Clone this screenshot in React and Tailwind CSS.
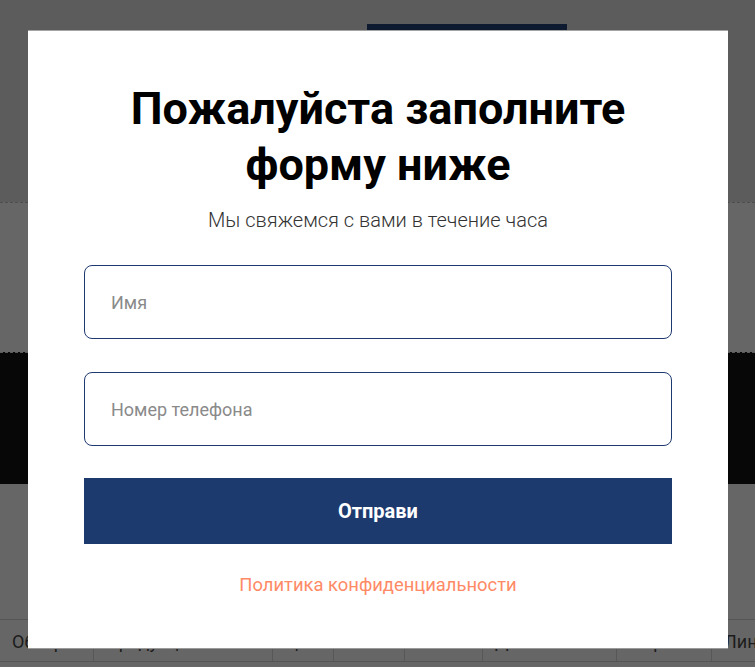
export default function App() {
    const cells = [
        { w: "w-[94px]", text: "Обзор" },
        { w: "w-[179px]", text: "Продукция" },
        { w: "w-[61px]", text: "Цены" },
        { w: "w-[71px]", text: "О нас" },
        { w: "w-[78px]", text: "Отзыв" },
        { w: "w-[134px]", text: "Доставка" },
        { w: "w-[95px]", text: "Форма" },
        { w: "w-[43px]", text: "Лин" },
    ];

    return (
        <div className="relative w-[755px] h-[667px] overflow-hidden bg-[#666666] font-['Roboto','Liberation_Sans',sans-serif]">
            {/* page behind the overlay */}
            <div className="h-[202px] bg-[#5c5c5c] pt-[24px]">
                <div className="ml-[367px] w-[200px] h-[8px] bg-[#0e1a30]" />
            </div>
            <div className="h-[150px] border-t border-dashed border-[#4e4e4e] bg-[#666666]" />
            <div className="h-[132px] border-t border-dashed border-[#5a5a5a] bg-[#070707]" />
            <div className="h-[135px] bg-[#666666]" />
            <div className="flex h-[43px] border-y border-[#555555] bg-[#666666]">
                {cells.map((c, i) => (
                    <div
                        key={i}
                        className={`${c.w} shrink-0 overflow-hidden whitespace-nowrap border-r border-[#575757] pl-[12px] pt-[8px] text-[18px] text-[#1c1c1c] last:border-r-0 last:pl-[12px]`}
                    >
                        {c.text}
                    </div>
                ))}
            </div>

            {/* modal */}
            <div className="absolute left-[28px] top-[30px] w-[700px] h-[618px] bg-white border-t border-[#a3a3a3] shadow-[0_1px_0_#9a9a9a] px-[56px] pt-[50px]">
                <h2 className="text-center text-[45px] leading-[56px] font-bold text-black">
                    Пожалуйста заполните
                    <br />
                    форму ниже
                </h2>
                <p className="mt-[13px] text-center text-[20px] leading-[28px] font-light text-[#333333]">
                    Мы свяжемся с вами в течение часа
                </p>

                <form className="mt-[31px] flex flex-col" onSubmit={(e) => e.preventDefault()}>
                    <input
                        type="text"
                        placeholder="Имя"
                        className="h-[74px] w-full rounded-[8px] border border-[#1e3a70] pl-[26px] text-[18px] text-[#222] placeholder:text-[#8a8a8a] outline-none"
                    />
                    <input
                        type="tel"
                        placeholder="Номер телефона"
                        className="mt-[33px] h-[74px] w-full rounded-[8px] border border-[#1e3a70] pl-[26px] text-[18px] text-[#222] placeholder:text-[#8a8a8a] outline-none"
                    />
                    <button
                        type="submit"
                        className="mt-[32px] h-[66px] w-full bg-[#1d3a6f] text-[20px] font-bold text-white"
                    >
                        Отправи
                    </button>
                </form>

                <p className="mt-[27px] text-center text-[18.4px] leading-[27px] text-[#ff8a66]">
                    Политика конфиденциальности
                </p>
            </div>
        </div>
    );
}
